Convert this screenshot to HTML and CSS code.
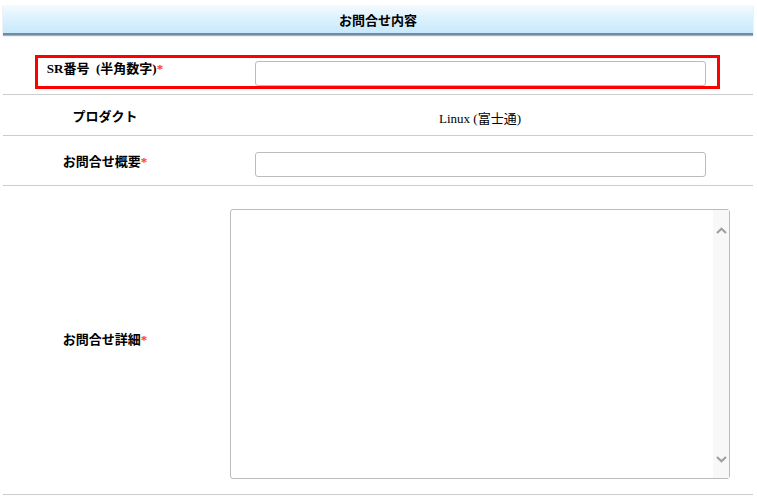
FILE: index.html
```html
<!DOCTYPE html>
<html lang="ja">

<head>
  <meta charset="UTF-8" />
  <meta name="viewport" content="width=device-width, initial-scale=1.0" />
  <title>お問合せ内容</title>
  <link rel="stylesheet" href="styles.css">
</head>

<body>
  <div class="panel">
    <div class="panel-head">お問合せ内容</div>

    <!-- SR number row, highlighted -->
    <div class="row row-sr">
      <div class="label">SR番号&nbsp; (半角数字)<span class="req">*</span></div>
      <div class="value"><input type="text" class="field"></div>
    </div>

    <div class="row row-product">
      <div class="label">プロダクト</div>
      <div class="value value-text">Linux (富士通)</div>
    </div>

    <div class="row row-summary">
      <div class="label">お問合せ概要<span class="req">*</span></div>
      <div class="value"><input type="text" class="field field-summary"></div>
    </div>

    <div class="row row-detail">
      <div class="label">お問合せ詳細<span class="req">*</span></div>
      <div class="value">
        <div class="detail-box">
          <textarea class="detail"></textarea>
          <!-- scrollbar track drawn over the textarea -->
          <div class="scroll-track">
            <svg class="arrow" width="11" height="7" viewBox="0 0 11 7"><path d="M1 6 L5.5 1.8 L10 6" fill="none" stroke="#a0a0a0" stroke-width="2.2"/></svg>
            <svg class="arrow" width="11" height="7" viewBox="0 0 11 7"><path d="M1 1 L5.5 5.2 L10 1" fill="none" stroke="#a0a0a0" stroke-width="2.2"/></svg>
          </div>
        </div>
      </div>
    </div>
  </div>
</body>

</html>
```

FILE: styles.css
```css
body {
  margin: 0;
  padding: 5px 4px 0 3px;
  font-family: "Liberation Serif", "Noto Sans CJK JP", serif;
  font-size: 13px;
  color: #000;
  background: #fff;
}

.panel {
  width: 750px;
}

/* Blue title bar */
.panel-head {
  height: 28px;
  line-height: 29px;
  text-align: center;
  font-family: "Noto Sans CJK JP", sans-serif;
  font-size: 13px;
  font-weight: bold;
  background: linear-gradient(to bottom, #f4fbff 0%, #dff3fd 40%, #c8e9fb 100%);
  border-bottom: 2px solid #6f8ca0;
  box-shadow: 0 1px 1px #9fb3c0;
}

.row {
  position: relative;
  display: grid;
  grid-template-columns: 204px 1fr;
  align-items: center;
  border-bottom: 1px solid #ccc;
}

.label {
  text-align: center;
  font-weight: bold;
  font-family: "Liberation Serif", "Noto Sans CJK JP", serif;
}

.req {
  color: #f40;
}

.value {
  display: flex;
  justify-content: center;
}

.value-text {
  font-family: "Liberation Serif", "Noto Sans CJK JP", serif;
  padding-top: 5px;
}

.field {
  box-sizing: border-box;
  width: 451px;
  height: 25px;
  margin: 0;
  border: 1px solid #bbb;
  border-radius: 3px;
}

/* Row 1 carries the red highlight */
.row-sr {
  height: 60px;
  padding-top: 20px;
  box-sizing: border-box;
}

.row-sr .label {
  padding-bottom: 14px;
}

.row-sr .field {
  margin-bottom: 2px;
}

.row-sr::after {
  content: "";
  position: absolute;
  top: 20px;
  left: 32px;
  right: 33px;
  bottom: 5px;
  border: 3px solid #f00;
}

.row-product {
  height: 40px;
}

.row-summary {
  height: 49px;
}

.row-summary .field {
  margin-top: 8px;
}

.row-detail {
  height: 308px;
}

.row-detail .label {
  padding-bottom: 4px;
}

.detail-box {
  position: relative;
  width: 500px;
  height: 270px;
  margin-top: 7px;
}

.detail {
  box-sizing: border-box;
  display: block;
  width: 100%;
  height: 100%;
  margin: 0;
  border: 1px solid #bbb;
  border-radius: 3px;
  resize: none;
  overflow: hidden;
}

.scroll-track {
  position: absolute;
  top: 1px;
  right: 1px;
  bottom: 1px;
  width: 16px;
  background: #f8f8f8;
  display: flex;
  flex-direction: column;
  justify-content: space-between;
  align-items: center;
  padding: 17px 0 15px;
  box-sizing: border-box;
}

.arrow {
  display: block;
}
```
